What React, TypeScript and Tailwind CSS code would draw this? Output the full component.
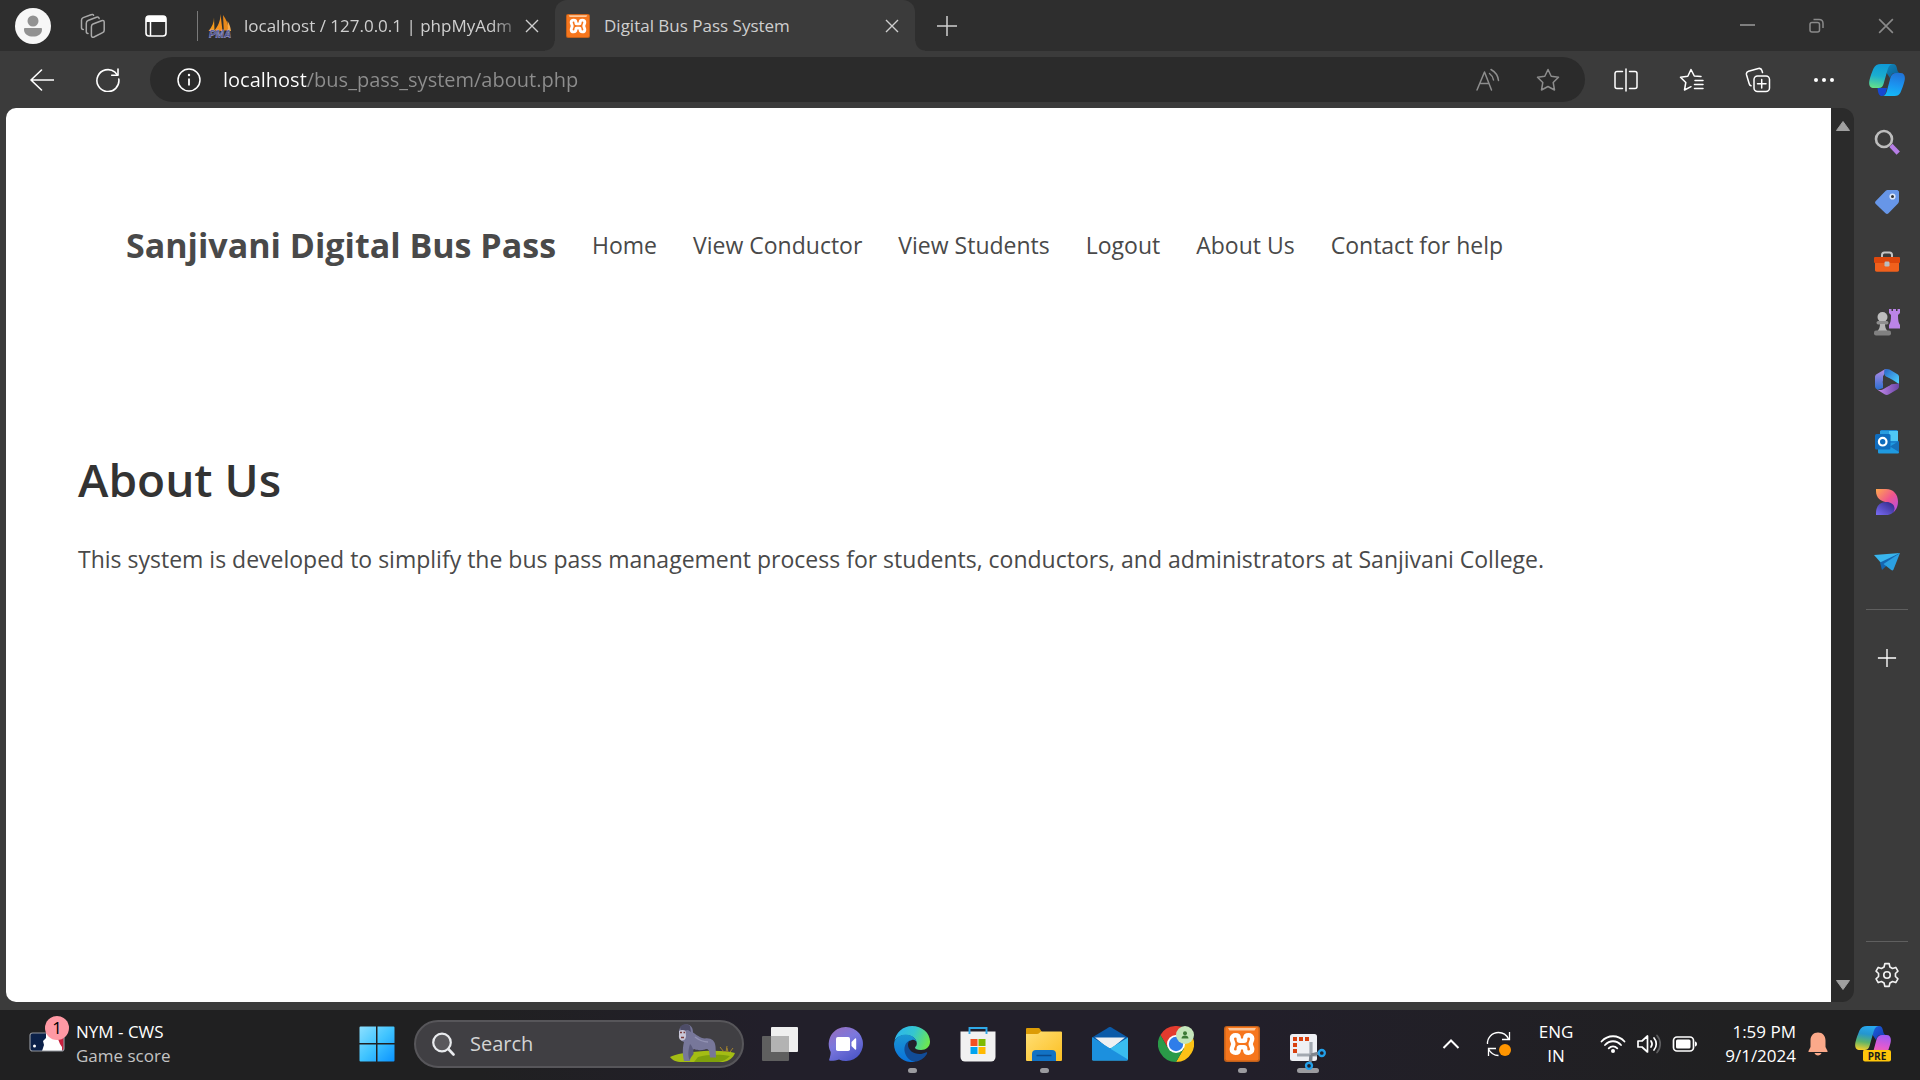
import React from "react";

type IconProps = { className?: string };

/* ---------- Browser chrome icons ---------- */

const Cross = ({ className }: IconProps) => (
  <svg width="14" height="14" viewBox="0 0 14 14" className={className} fill="none" stroke="currentColor" strokeWidth="1.4">
    <path d="M1 1l12 12M13 1L1 13" />
  </svg>
);

const Plus = ({ className }: IconProps) => (
  <svg width="22" height="22" viewBox="0 0 22 22" className={className} fill="none" stroke="currentColor" strokeWidth="1.5">
    <path d="M11 1v20M1 11h20" />
  </svg>
);

const Avatar = () => (
  <svg width="36" height="36" viewBox="0 0 36 36">
    <circle cx="18" cy="18" r="18" fill="#f7f7f7" />
    <circle cx="18" cy="13" r="5.5" fill="#929292" />
    <path d="M10 20h16c.8 0 1 .6 1 1.400C27 26 23 28.500 18 28.500S9 26 9 21.400c0-.8.2-1.400 1-1.400z" fill="#929292" />
  </svg>
);

const Workspaces = () => (
  <svg width="26" height="26" viewBox="0 0 26 26" fill="none" stroke="#a9a9a9" strokeWidth="1.500" strokeLinejoin="round" strokeLinecap="round">
    <path d="M13 11l8.500-3.300c1.700-.6 2.700 0 2.700 1.500v8c0 1.300-.4 1.900-1.600 2.400L14 24c-1.600.6-2.600 0-2.600-1.500v-8.800c0-1.300.3-2.200 1.600-2.700z" />
    <path d="M8 20.500c-1.200 0-1.700-.7-1.700-2v-8.300c0-1.500.4-2.200 1.700-2.700l8.500-3.300c1.400-.5 2.300 0 2.600 1.200" />
    <path d="M3.300 16.500c-1.200 0-1.800-.7-1.800-2V7.300c0-1.500.4-2.200 1.700-2.700L11 1.700c1.400-.5 2.300-.3 2.600.6" />
  </svg>
);

const TabActions = () => (
  <svg width="22" height="22" viewBox="0 0 22 22">
    <rect x="1" y="1" width="20" height="20" rx="3" fill="none" stroke="#fff" strokeWidth="1.600" />
    <path d="M1 4a3 3 0 0 1 3-3h14a3 3 0 0 1 3 3v3H1z" fill="#fff" />
    <path d="M5.500 7v14" stroke="#fff" strokeWidth="1.500" />
  </svg>
);

const PhpMyAdmin = () => (
  <svg width="24" height="24" viewBox="0 0 24 24">
    <path d="M6 3.500C6 9 4 13 .5 17H6.500z" fill="#f59a1a" />
    <path d="M12.500 0C12.500 7 10 12 6.500 16.500L14.500 17z" fill="#f7931e" />
    <path d="M15 1c3 4 5.500 9 5.800 15.500h-5z" fill="#e8891a" />
    <path d="M19.500 7c2 3 3 6 3.500 10h-3z" fill="#f9ad4d" />
    <text x="12" y="23.500" textAnchor="middle" fontFamily="Liberation Sans" fontWeight="700" fontStyle="italic" fontSize="10" fill="#3c3f7d" stroke="#b9bbe6" strokeWidth="0.400">PMA</text>
  </svg>
);

const Xampp = ({ size }: { size: number }) => (
  <svg width={size} height={size} viewBox="0 0 36 36">
    <rect width="36" height="36" rx="3" fill="#c2611b" />
    <rect x="1.500" y="1" width="33" height="33.500" rx="2" fill="#f6761d" />
    <path d="M4 2h28l-1.500 2.500h-25z" fill="#fbc79b" />
    <path
      d="M18 14.800h-2c-.9 0-1.200-.5-1.200-1.300v-1.300c0-2-1.300-3-3.300-3s-3.700 1.300-3.700 3.300c0 2.500 1.500 3.500 1.500 5.500s-1.500 3-1.500 5.500c0 2 1.500 3.300 3.700 3.300s3.300-1 3.300-3v-1.300c0-.8.3-1.300 1.200-1.300h4c.9 0 1.200.5 1.200 1.300v1.300c0 2 1.300 3 3.300 3s3.700-1.300 3.700-3.300c0-2.500-1.500-3.500-1.500-5.500s1.500-3 1.500-5.500c0-2-1.500-3.300-3.700-3.300s-3.300 1-3.300 3v1.300c0 .8-.3 1.300-1.200 1.300z"
      fill="none" stroke="#fff" strokeWidth="4.400" strokeLinejoin="round"
    />
  </svg>
);

const BackArrow = () => (
  <svg width="24" height="24" viewBox="0 0 24 24" fill="none" stroke="#fff" strokeWidth="1.600" strokeLinecap="round" strokeLinejoin="round">
    <path d="M23.500 12H1M11.500 2L1 12l10.500 10" />
  </svg>
);

const Reload = () => (
  <svg width="24" height="24" viewBox="0 0 24 24" fill="none" stroke="#fff" strokeWidth="1.600" strokeLinecap="round" strokeLinejoin="round">
    <path d="M22.800 11A11 11 0 1 1 19 4.200L21.500 7" />
    <path d="M22 1v6.300h-6.300" />
  </svg>
);

const Info = () => (
  <svg width="24" height="24" viewBox="0 0 24 24" fill="none" stroke="#fff" strokeWidth="1.500">
    <circle cx="12" cy="12" r="11" />
    <path d="M12 10.500v7" strokeWidth="1.800" />
    <circle cx="12" cy="7" r="1.200" fill="#fff" stroke="none" />
  </svg>
);

const ReadAloud = () => (
  <svg width="24" height="24" viewBox="0 0 24 24" fill="none" stroke="#8d8d8d" strokeWidth="1.500" strokeLinecap="round" strokeLinejoin="round">
    <path d="M1 22L8.500 4l7 18M3.800 15.500h9.200" />
    <path d="M13.500 5.500c2.300 1.700 3.600 4 4 6.500M15 1.500c4.500 2.500 7 6.500 7.500 11" />
  </svg>
);

const STAR = "M12 1.500l3.200 6.800 7.300 1-5.300 5.200 1.300 7.500L12 18.500 5.500 22l1.300-7.500L1.500 9.300l7.300-1z";

const Star = () => (
  <svg width="24" height="24" viewBox="0 0 24 24" fill="none" stroke="#8d8d8d" strokeWidth="1.500" strokeLinejoin="round">
    <path d={STAR} />
  </svg>
);

const SplitScreen = () => (
  <svg width="24" height="24" viewBox="0 0 24 24" fill="none" stroke="#fff" strokeWidth="1.500" strokeLinecap="round">
    <path d="M12 1v22M8.500 3.500H3a2 2 0 0 0-2 2v13a2 2 0 0 0 2 2h5.500M15.500 3.500H21a2 2 0 0 1 2 2v13a2 2 0 0 1-2 2h-5.500" />
  </svg>
);

const Favorites = () => (
  <svg width="25" height="24" viewBox="0 0 25 24" fill="none" stroke="#fff" strokeWidth="1.500" strokeLinecap="round" strokeLinejoin="round">
    <path d="M22 8.500l-6.700-.5L12 1.500 8.800 8.300l-7.300 1 5.300 5.200L5.500 22l6.500-3.300M16 12.500h8M15.500 16.500H24M15.500 20.500H24" />
  </svg>
);

const Collections = () => (
  <svg width="26" height="26" viewBox="0 0 26 26" fill="none" stroke="#fff" strokeWidth="1.500" strokeLinecap="round" strokeLinejoin="round">
    <rect x="9" y="9" width="15.500" height="15.500" rx="3.500" />
    <path d="M16.700 12.500v8.500M12.500 16.700H21M17.500 5.500l-.6-2c-.5-1.800-1.800-2.400-3.500-2L3.500 4.200c-1.700.5-2.400 1.800-2 3.500l2.700 9c.3 1.200 1 1.800 1.800 2" />
  </svg>
);

const More = () => (
  <svg width="24" height="24" viewBox="0 0 24 24" fill="#fff">
    <circle cx="4" cy="12" r="2" /><circle cx="12" cy="12" r="2" /><circle cx="20" cy="12" r="2" />
  </svg>
);

const CopilotRibbons = ({ id, left, fold, right, under }: { id: string; left: string[]; fold: string[]; right: string[]; under: string }) => (
  <>
    <defs>
      <linearGradient id={`${id}l`} x1=".5" y1="0" x2=".35" y2="1">
        {left.map((c, i) => <stop key={c} offset={i / (left.length - 1)} stopColor={c} />)}
      </linearGradient>
      <linearGradient id={`${id}f`} x1="0" y1="0" x2="1" y2="1">
        {fold.map((c, i) => <stop key={c} offset={i / (fold.length - 1)} stopColor={c} />)}
      </linearGradient>
      <linearGradient id={`${id}r`} x1=".6" y1="0" x2=".4" y2="1">
        {right.map((c, i) => <stop key={c} offset={i / (right.length - 1)} stopColor={c} />)}
      </linearGradient>
    </defs>
    <path d="M18 0h6c2.500 0 3.500 2 4 4.500.5 2.500 1 4.500 4 4.500h-6c-3 0-4 2-5 5l-4-6z" fill={`url(#${id}f)`} />
    <path d="M8.500 24H18l-1 4c-.7 2.700-2 4-4 4-3 0-3.500-2.500-4-4.500z" fill={under} />
    <path d="M12 0h11.500c-3 .5-4 2.500-5 6l-4 14c-.8 2.800-2 4-5 4H5c-4.500 0-5.500-3.500-4.500-8C1.500 12 3 8 4.500 4.500 6 1.200 8.500 0 12 0z" fill={`url(#${id}l)`} />
    <path d="M27 9h4.500c4 0 5 3.500 4 8-1 4-2.500 8-4 11.500-1.200 2.500-3 3.500-6 3.500H13c3 0 4-2 5-5.500l3.500-13C22.500 10.500 24 9 27 9z" fill={`url(#${id}r)`} />
  </>
);

const Copilot = () => (
  <svg width="36" height="32" viewBox="0 0 36 32">
    <CopilotRibbons id="cb" left={["#0f9ad6", "#1aaed0", "#63e08a"]} fold={["#1286b8", "#0a5a92"]} right={["#2173d6", "#1b93f0", "#14b9f7"]} under="#1747d0" />
  </svg>
);

/* ---------- Sidebar icons ---------- */

const SideSearch = () => (
  <svg width="26" height="26" viewBox="0 0 26 26" fill="none">
    <circle cx="10" cy="10" r="8" stroke="#bdbdbd" strokeWidth="2.600" />
    <path d="M18.500 18l4.200 4.500" stroke="#b67ee6" strokeWidth="4.500" strokeLinecap="square" />
  </svg>
);
const SideTag = () => (
  <svg width="26" height="26" viewBox="0 0 26 26">
    <path d="M14 1h9.500L25 2.500V12c0 1-.3 1.700-1 2.400l-9.500 9.800c-1 1-2 1-3 0L1.800 15c-1-1-1-2 0-3L11.500 2c.8-.8 1.500-1 2.500-1z" fill="#6796e8" />
    <circle cx="18.500" cy="7.500" r="2.300" fill="#333" stroke="#dbe7fb" strokeWidth="1.600" />
  </svg>
);
const SideTools = () => (
  <svg width="28" height="22" viewBox="0 0 28 22">
    <path d="M9 7V4c0-1.500 1-2.500 2.500-2.500h5C18 1.500 19 2.500 19 4v3" fill="none" stroke="#c4c4c4" strokeWidth="2" />
    <path d="M2 11h24v8c0 1-.6 1.700-1.700 1.700H3.700C2.600 20.700 2 20 2 19z" fill="#f0601c" />
    <rect x="1" y="6" width="26" height="6" rx="1" fill="#dd470c" />
    <rect x="11.500" y="10.500" width="5" height="5" rx="1.200" fill="#b9bdc1" />
  </svg>
);
const SideGames = () => (
  <svg width="28" height="28" viewBox="0 0 28 28">
    <path d="M16 1h2.500v2H20V1h3v2h1.500V1H27v4l-2 2c0 5 .5 8 2 10v3.500H16V17c1.500-2 2-5 2-10l-2-2z" fill="#bb84e8" />
    <circle cx="9.500" cy="9" r="5" fill="#bdbdbd" />
    <rect x="3.500" y="13" width="12" height="3.500" rx="1.700" fill="#8f8f8f" />
    <path d="M7 16h5c0 3 .8 5 2.500 7h-10C6.200 21 7 19 7 16z" fill="#b5b5b5" />
    <rect x="1" y="22.500" width="17" height="5" rx="2" fill="#808080" />
  </svg>
);
const SideM365 = () => (
  <svg width="26" height="28" viewBox="0 0 26 28">
    <defs>
      <linearGradient id="m3a" x1="0" y1="0" x2="0" y2="1">
        <stop offset="0" stopColor="#b78be6" /><stop offset="1" stopColor="#2a6fd0" />
      </linearGradient>
      <linearGradient id="m3b" x1="0" y1="0" x2="1" y2="1">
        <stop offset="0" stopColor="#2a63c8" /><stop offset="1" stopColor="#4fd6ff" />
      </linearGradient>
      <linearGradient id="m3c" x1="0" y1="0" x2="1" y2="0">
        <stop offset="0" stopColor="#c98df0" /><stop offset="1" stopColor="#6a45a5" />
      </linearGradient>
    </defs>
    <path d="M13 1L9 8.500V20l-5 1.800-1.500-.8C1.500 20.300 1 19.400 1 18V9c0-1.300.5-2.200 1.500-2.800l8-4.600C11.300 1.200 12 1 13 1z" fill="url(#m3a)" />
    <path d="M10.500 1.600c1.500-.8 3.500-.8 5 0l8 4.600C24.500 7 25 7.700 25 9v7l-7-4.500-6-3c-1.500-1-2.500-3-1.500-6.900z" fill="url(#m3b)" />
    <path d="M25 15.500V18c0 1.500-.5 2.500-1.500 3.200L15 26.300c-1.500.9-3 .9-4.500 0L3 21.500c3 1 5 .5 7-.7l7.500-4.500z" fill="url(#m3c)" />
    <circle cx="13" cy="14" r="4.300" fill="#3b3b3b" />
  </svg>
);
const SideOutlook = () => (
  <svg width="26" height="26" viewBox="0 0 26 26">
    <rect x="6" y="1" width="18" height="17" rx="1.500" fill="#1b84cf" />
    <rect x="14" y="2" width="10" height="10" fill="#4fc8f5" />
    <rect x="6" y="2" width="9" height="7" fill="#2a9de0" />
    <path d="M4 14h20l1-2v11c0 1-.6 1.500-1.500 1.500h-18C4.500 24.500 4 24 4 23z" fill="#1f9ae0" />
    <path d="M25 12v11l-9-5.500z" fill="#1670b8" />
    <rect x="1" y="5" width="15.500" height="15.500" rx="1.500" fill="#0f6cbd" />
    <circle cx="8.700" cy="12.700" r="3.800" fill="none" stroke="#fff" strokeWidth="2.200" />
  </svg>
);
const SideDesigner = () => (
  <svg width="26" height="28" viewBox="0 0 26 28">
    <defs>
      <linearGradient id="dsA" x1="0" y1="0" x2="1" y2="1">
        <stop offset="0" stopColor="#ffa94d" /><stop offset=".5" stopColor="#f0568c" /><stop offset="1" stopColor="#b14bf0" />
      </linearGradient>
      <linearGradient id="dsB" x1="0" y1="1" x2="1" y2="0">
        <stop offset="0" stopColor="#7a6cf5" /><stop offset="1" stopColor="#2d2580" />
      </linearGradient>
    </defs>
    <path d="M2 1h10c7.500 0 12 5.500 12 12.500 0 5-2 9-5 11 1.500-5 0-9-5-10C6.500 13.500 2 10 2 3z" fill="url(#dsA)" />
    <path d="M2 27v-2c0-7 4-11 10-11 5 0 8 2.500 8.500 6 .5 4-3 7-8.500 7z" fill="url(#dsB)" />
  </svg>
);
const SideDrop = () => (
  <svg width="28" height="20" viewBox="0 0 28 20">
    <path d="M1 3L27 1 9 12z" fill="#39b6ee" />
    <path d="M7 10.500L27 1 9 18z" fill="#1565b0" />
    <path d="M27 1l-6.500 16.500c-.5 1-1.300 1.200-2.200.6L10.500 12z" fill="#2ba0e2" />
  </svg>
);
const Gear = () => (
  <svg width="26" height="28" viewBox="0 0 24 24" fill="none" stroke="#f2f2f2" strokeWidth="1.500" strokeLinejoin="round">
    <path d="M10 1.500h4l.7 3.100 2.400 1.400 3-1 2 3.500-2.300 2.100v2.800l2.300 2.100-2 3.500-3-1-2.400 1.400-.7 3.100h-4l-.7-3.100L6.900 18l-3 1-2-3.500 2.300-2.100v-2.800L1.900 8.500l2-3.500 3 1 2.400-1.400z" />
    <circle cx="12" cy="12" r="3" />
  </svg>
);

/* ---------- Taskbar icons ---------- */

const Baseball = () => (
  <svg width="36" height="20" viewBox="0 0 36 20">
    <rect x="1" y="1" width="34" height="18" rx="2.500" fill="#0b2149" />
    <path d="M24 1h8.500A2.500 2.500 0 0 1 35 3.500v13a2.500 2.500 0 0 1-2.500 2.500H26z" fill="#c8203e" />
    <path d="M17 1h9l3 6 2 5 2 3v4H13l2-6-1-4 3-3z" fill="#fff" />
    <circle cx="5.500" cy="14" r="1.500" fill="#fff" />
    <rect x="1" y="1" width="34" height="18" rx="2.500" fill="none" stroke="#8f949c" strokeWidth="1.200" />
  </svg>
);

const WindowsLogo = () => (
  <svg width="36" height="36" viewBox="0 0 36 36">
    <defs>
      <linearGradient id="win" x1="0" y1="0" x2="1" y2="1">
        <stop offset="0" stopColor="#8de0ff" /><stop offset=".5" stopColor="#40c4ff" /><stop offset="1" stopColor="#0a93ff" />
      </linearGradient>
    </defs>
    <path d="M1.500.5H17v16.500H.5V1.500a1 1 0 0 1 1-1zM18.500.5h16a1 1 0 0 1 1 1V17h-17zM.5 18.500H17v17H1.500a1 1 0 0 1-1-1zM18.500 18.500h17v16a1 1 0 0 1-1 1h-16z" fill="url(#win)" />
  </svg>
);

const Magnifier = () => (
  <svg width="23" height="24" viewBox="0 0 23 24" fill="none" stroke="#e9ebee" strokeWidth="2.200" strokeLinecap="round">
    <circle cx="10" cy="10.500" r="8.800" fill="#ffffff22" />
    <path d="M16.300 17l5.200 5.500" strokeWidth="2.600" />
  </svg>
);

const Gorilla = () => (
  <svg width="68" height="40" viewBox="0 0 68 40">
    <path d="M2 33c5-3 18-5 34-6 13-.5 24 0 31 2-2 5-6 8-12 9H14C8 38 4 36 2 33z" fill="#a4bd14" />
    <path d="M30 33c9-2.500 22-3 32-1-3 3-6 5-11 6H26z" fill="#7fa00c" />
    <path d="M56 28l-4-5M58 28l1-6M60 28l-1-4M62 28l3-4" stroke="#a5842c" strokeWidth="1" />
    <path d="M11 8c0-5 3.500-8 8-7.500 4 .4 6 3.500 6 8 3 2 7 5.500 12 6 6-.8 10 2 10.500 8 .3 4 .3 7 .5 11h-6l-1-7c-1-1-2-2-4-1-4 1-8 1-11-.5-2.500 2-3 6-4 12h-6c-2-9-1-15 0-19-3-1-5-4-5-9z" fill="#77779a" />
    <path d="M22 20c2 2 4 6 3.500 10l-3 4-1 2c-2-5-1-11 .5-16z" fill="#5b5b7c" />
    <path d="M27 13c4 3 8 5 13 5" stroke="#9292b3" strokeWidth="1.500" fill="none" />
    <path d="M12 3c2-3 7-4 10-1l1 6-3-2-7 1z" fill="#4d4c67" />
    <path d="M11 7c2-1.500 5-1.500 6.500 0L18 12c0 3-2 4.500-4 4.500S10.500 14 11 11z" fill="#c9c7d8" />
    <path d="M12 8.500h2M15.500 8.500h1.500M13 13.500h3" stroke="#7a3a3a" strokeWidth="1.400" />
  </svg>
);

const TaskView = () => (
  <svg width="36" height="36" viewBox="0 0 36 36">
    <rect x="9" y="1" width="27" height="25" rx="1" fill="#efefef" />
    <rect x="0" y="10" width="27" height="25" rx="1" fill="#5f5f5f" />
    <path d="M9 10h18v16H9z" fill="#b3b3b3" />
  </svg>
);
const Chat = () => (
  <svg width="36" height="36" viewBox="0 0 36 36">
    <defs>
      <linearGradient id="chat" x1="0" y1="0" x2=".6" y2="1">
        <stop offset="0" stopColor="#9b6dbb" /><stop offset=".5" stopColor="#7c78dd" /><stop offset="1" stopColor="#5059c9" />
      </linearGradient>
    </defs>
    <path d="M18 1a17 17 0 1 1-7 32.500c-2.500 1-6 1.500-9 1.300-.8 0-1-.5-.8-1.200.8-2.400 1.500-5 1.500-7.600A17 17 0 0 1 18 1z" fill="url(#chat)" />
    <rect x="8" y="11" width="14" height="14" rx="1.800" fill="#fff" />
    <path d="M23.500 16l3.500-3.500c.6-.5 1.200-.2 1.200.6v9.800c0 .8-.6 1.100-1.200.6L23.500 20z" fill="#fff" />
  </svg>
);
const Edge = () => (
  <svg width="36" height="36" viewBox="0 0 36 36">
    <defs>
      <linearGradient id="edA" x1="0" y1=".3" x2="1" y2=".6">
        <stop offset="0" stopColor="#2bb4ef" /><stop offset=".5" stopColor="#35c6cf" /><stop offset="1" stopColor="#6de84e" />
      </linearGradient>
      <linearGradient id="edB" x1="0" y1="0" x2="0" y2="1">
        <stop offset="0" stopColor="#1b96d2" /><stop offset="1" stopColor="#0a72dc" />
      </linearGradient>
    </defs>
    <path d="M.3 16C1.500 6.500 9 0 18 0c10 0 18 7 18 15.500 0 5.500-4 8.500-9 8.500-4 0-6-1-6-2.200 0-1 1.800-1.600 1.800-4.300C22.800 13 18 9 12 9S1 12 .3 16z" fill="url(#edA)" />
    <path d="M0 18C.5 12 6 8.500 11.500 8.500c6.500 0 10.500 4 11.300 8C22 14.500 20 13.500 18 14c-5 1-7 5.500-6 11 1 5.500 5 10 9.500 10.700C10 38 0 29 0 18z" fill="url(#edB)" />
    <path d="M16 14.300c-5 2-6.500 7.700-5 12.700 1.700 5.500 6.500 9 11.500 8.500 5-1 8.500-4.500 10.500-7.800.6-1-.2-1.600-1.200-1.200-1.800.9-4 1.500-6.300 1.500-6 0-11.500-4-11.500-9 0-2 .8-3.700 2-4.700z" fill="#114c97" />
  </svg>
);
const Store = () => (
  <svg width="36" height="36" viewBox="0 0 36 36">
    <path d="M.5 5.500h35V31a4.500 4.500 0 0 1-4.500 4.500H5A4.500 4.500 0 0 1 .5 31z" fill="#f1f1f1" />
    <path d="M9.500 8V2h17v6" fill="none" stroke="#2fa9e8" strokeWidth="1.900" />
    <path d="M10.500 13h7v7h-7z" fill="#f25022" /><path d="M18.500 13h7v7h-7z" fill="#7fba00" />
    <path d="M10.500 21h7v7h-7z" fill="#00a4ef" /><path d="M18.500 21h7v7h-7z" fill="#ffb900" />
  </svg>
);
const Folder = () => (
  <svg width="36" height="36" viewBox="0 0 36 36">
    <defs>
      <linearGradient id="fol" x1="0" y1="0" x2="1" y2="1"><stop offset="0" stopColor="#ffdf75" /><stop offset="1" stopColor="#fcbf22" /></linearGradient>
    </defs>
    <path d="M0 3a1 1 0 0 1 1-1h11c1 0 1.500.3 2 1l1.500 2.500V12H0z" fill="#dc9c06" />
    <path d="M0 8h11c1 0 1.700-.3 2.300-1L15 5.500h20a1 1 0 0 1 1 1V34a1 1 0 0 1-1 1H1a1 1 0 0 1-1-1z" fill="url(#fol)" />
    <path d="M6 35v-7a4 4 0 0 1 4-4h16a4 4 0 0 1 4 4v7z" fill="#1272c4" />
    <path d="M10.500 29.500h15" stroke="#0a4a8c" strokeWidth="1.500" />
  </svg>
);
const Mail = () => (
  <svg width="36" height="36" viewBox="0 0 36 36">
    <path d="M0 11.500L17 1.200c.7-.4 1.300-.4 2 0L36 11.500V20H0z" fill="#0b5aa8" />
    <path d="M3 11.500h30L20 22h-4z" fill="#eef0f2" />
    <path d="M0 11.500l18 11 18-11V33a1.500 1.500 0 0 1-1.500 1.500h-33A1.500 1.500 0 0 1 0 33z" fill="#39bdf0" />
    <path d="M0 11.500l36 22c-.3.700-.8 1-1.500 1h-33A1.500 1.500 0 0 1 0 33z" fill="#1c90de" />
  </svg>
);
const Chrome = () => (
  <svg width="36" height="36" viewBox="0 0 36 36">
    <path d="M2.400 9A18 18 0 0 1 33.600 9H18v9l-7.800 4.500z" fill="#e33b2e" />
    <path d="M33.600 9A18 18 0 0 1 18 36l7.800-13.500L18 18V9z" fill="#fbc116" />
    <path d="M18 36A18 18 0 0 1 2.400 9l7.800 13.500L18 18l7.800 4.500z" fill="#2a9a48" />
    <circle cx="18" cy="18" r="9" fill="#fff" /><circle cx="18" cy="18" r="7.200" fill="#2f7de9" />
    <circle cx="27" cy="9" r="9" fill="#c5e6bb" />
    <circle cx="27" cy="7.300" r="2" fill="#3c7a36" />
    <path d="M23.500 12.500c0-2 1.500-3 3.500-3s3.500 1 3.500 3z" fill="#3c7a36" />
  </svg>
);
const Snipping = () => (
  <svg width="36" height="36" viewBox="0 0 36 36">
    <rect x="0" y="0" width="27" height="27" rx="2.500" fill="#eef0f4" />
    <path d="M3 5h16.500M5 9v11" fill="none" stroke="#d9410f" strokeWidth="4" strokeDasharray="4 2" />
    <path d="M7 21h20M21 8v19" stroke="#a3a9b1" strokeWidth="3.200" fill="none" />
    <path d="M21 21l8-2M21 21l-1 8" stroke="#7d848d" strokeWidth="3" />
    <circle cx="31.800" cy="19" r="3" fill="none" stroke="#22a0ea" strokeWidth="2.300" />
    <circle cx="19" cy="31.800" r="3" fill="none" stroke="#22a0ea" strokeWidth="2.300" />
  </svg>
);

const Chevron = () => (
  <svg width="18" height="12" viewBox="0 0 18 12" fill="none" stroke="#fff" strokeWidth="2"><path d="M1.500 10L9 2.500l7.500 7.500" /></svg>
);
const Sync = () => (
  <svg width="26" height="26" viewBox="0 0 26 26" fill="none" stroke="#fff" strokeWidth="1.300">
    <path d="M1.500 13C1 7 6 1.500 12.500 1.500c4.500 0 8 2 10 6.500M23.500 1v7.500H16M2.500 25v-7.500H10M2.500 18c2 4 5.500 6.500 10 6.500" />
    <circle cx="19" cy="19" r="6" fill="#ff9500" stroke="none" />
  </svg>
);
const Wifi = () => (
  <svg width="26" height="20" viewBox="0 0 26 20" fill="none" stroke="#fff" strokeWidth="1.800" strokeLinecap="round">
    <path d="M1.500 7.500c6.500-7 16.500-7 23 0M5 11c4.600-5 11.400-5 16 0M8.700 14.300c2.500-2.600 6.100-2.600 8.600 0" />
    <circle cx="13" cy="17" r="2" fill="#fff" stroke="none" />
  </svg>
);
const Speaker = () => (
  <svg width="26" height="20" viewBox="0 0 26 20" fill="none" stroke="#fff" strokeWidth="1.700" strokeLinecap="round" strokeLinejoin="round">
    <path d="M2 7h4l5.500-5v16L6 13H2z" />
    <path d="M15 7c1.300 1.800 1.300 4.200 0 6M18 4c3 3.500 3 8.500 0 12" />
    <path d="M21 1.500c4.300 5 4.300 12 0 17" stroke="#5d5d5f" />
  </svg>
);
const Battery = () => (
  <svg width="26" height="18" viewBox="0 0 26 18">
    <rect x="1.500" y="2" width="20" height="14" rx="3.500" fill="none" stroke="#fff" strokeWidth="1.700" />
    <rect x="4" y="4.500" width="14.500" height="9" rx="1.500" fill="#fff" />
    <path d="M23 6.500c1.500.3 2 1.300 2 2.500s-.5 2.200-2 2.500z" fill="#fff" />
  </svg>
);
const Bell = () => (
  <svg width="20" height="24" viewBox="0 0 20 24" fill="#fba98a">
    <path d="M10 .5c4.700 0 7.500 3.500 7.500 8v6.500L19.500 19v1H.5v-1l2-4V8.500c0-4.500 2.800-8 7.500-8zM6.500 21h7c-.5 1.600-1.800 2.500-3.500 2.500S7 22.600 6.500 21z" />
  </svg>
);
const CopilotPreview = () => (
  <svg width="36" height="36" viewBox="0 0 36 36">
    <g>
      <CopilotRibbons id="cp" left={["#28a8ee", "#2596cf", "#5bb36b", "#f2cf2c"]} fold={["#1c62e0", "#1532a8"]} right={["#a05cf5", "#e25ad0", "#ff7d74"]} under="#f4a03c" />
    </g>
    <rect x="8" y="24" width="28" height="11.500" rx="2" fill="#ffc60a" />
    <text x="22" y="33.500" textAnchor="middle" fontFamily="Open Sans" fontWeight="700" fontSize="10" fill="#1b1b1b">PRE</text>
  </svg>
);

/* ---------- Layout ---------- */

const sidebarApps: { label: string; icon: React.ReactNode }[] = [
  { label: "Search", icon: <SideSearch /> },
  { label: "Shopping", icon: <SideTag /> },
  { label: "Tools", icon: <SideTools /> },
  { label: "Games", icon: <SideGames /> },
  { label: "Microsoft 365", icon: <SideM365 /> },
  { label: "Outlook", icon: <SideOutlook /> },
  { label: "Designer", icon: <SideDesigner /> },
  { label: "Drop", icon: <SideDrop /> },
];

const taskbarApps: { label: string; icon: React.ReactNode; state?: "open" | "active" }[] = [
  { label: "Task view", icon: <TaskView /> },
  { label: "Chat", icon: <Chat /> },
  { label: "Microsoft Edge", icon: <Edge />, state: "open" },
  { label: "Microsoft Store", icon: <Store /> },
  { label: "File Explorer", icon: <Folder />, state: "open" },
  { label: "Mail", icon: <Mail /> },
  { label: "Google Chrome", icon: <Chrome /> },
  { label: "XAMPP", icon: <Xampp size={36} />, state: "open" },
  { label: "Snipping Tool", icon: <Snipping />, state: "active" },
];

const navLinks = ["Home", "View Conductor", "View Students", "Logout", "About Us", "Contact for help"];

function TabStrip() {
  return (
    <header className="flex h-[51px] shrink-0 items-center bg-[#2e2e2e] text-[#cfcfcf]">
      <button aria-label="Profile" className="ml-[15px]"><Avatar /></button>
      <button aria-label="Workspaces" className="ml-[29px]"><Workspaces /></button>
      <button aria-label="Tab actions" className="ml-[39px]"><TabActions /></button>
      <div className="ml-[30px] h-[30px] w-px bg-[#7a7a7a]" />
      <div className="flex h-full w-[357px] items-center pl-[10px] pr-4">
        <PhpMyAdmin />
        <span className="ml-3 flex-1 whitespace-nowrap text-[17px] [mask-image:linear-gradient(to_right,black_88%,transparent)]">
          localhost / 127.0.0.1 | phpMyAdm
        </span>
        <button aria-label="Close tab"><Cross /></button>
      </div>
      <div className="relative flex h-full w-[360px] items-center rounded-t-[12px] bg-[#3b3b3b] pl-[11px] pr-4">
        <span className="absolute bottom-0 right-full size-[10px] bg-[radial-gradient(circle_at_0_0,#2e2e2e_9px,#3b3b3b_10px)]" />
        <span className="absolute bottom-0 left-full size-[10px] bg-[radial-gradient(circle_at_100%_0,#2e2e2e_9px,#3b3b3b_10px)]" />
        <Xampp size={24} />
        <span className="ml-[14px] flex-1 whitespace-nowrap text-[17px]">Digital Bus Pass System</span>
        <button aria-label="Close tab"><Cross /></button>
      </div>
      <button aria-label="New tab" className="ml-[21px]"><Plus /></button>
      <div className="flex-1" />
      <div className="flex items-center gap-[54px] pr-[26px] text-[#8a8a8a]">
        <button aria-label="Minimize">
          <svg width="15" height="15" viewBox="0 0 15 15"><path d="M0 7h15" stroke="currentColor" strokeWidth="1.800" /></svg>
        </button>
        <button aria-label="Restore">
          <svg width="15" height="15" viewBox="0 0 15 15" fill="none" stroke="currentColor" strokeWidth="1.500">
            <rect x="1" y="4.500" width="9.500" height="9.500" rx="2" />
            <path d="M4.500 1.500H10c2.500 0 4 1.500 4 4V10" />
          </svg>
        </button>
        <button aria-label="Close window"><Cross className="size-4" /></button>
      </div>
    </header>
  );
}

function Toolbar() {
  return (
    <div className="flex h-[57px] shrink-0 items-center bg-[#3b3b3b]">
      <button aria-label="Back" className="ml-[30px]"><BackArrow /></button>
      <button aria-label="Reload" className="ml-[42px]"><Reload /></button>
      <div className="ml-[30px] flex h-[45px] flex-1 items-center rounded-full bg-[#2b2b2b] pl-[27px] pr-[25px]">
        <Info />
        <input
          aria-label="Address"
          defaultValue="localhost/bus_pass_system/about.php"
          className="ml-[22px] h-9 min-w-0 flex-1 bg-[linear-gradient(to_right,#ffffff_84px,#8e8e8e_84px)] bg-clip-text text-[20px] text-transparent outline-none"
        />
        <div className="flex gap-9">
          <button aria-label="Read aloud"><ReadAloud /></button>
          <button aria-label="Add to favorites"><Star /></button>
        </div>
      </div>
      <div className="ml-[29px] flex items-center gap-[41px]">
        <button aria-label="Split screen"><SplitScreen /></button>
        <button aria-label="Favorites"><Favorites /></button>
        <button aria-label="Collections"><Collections /></button>
        <button aria-label="More"><More /></button>
      </div>
      <button aria-label="Copilot" className="ml-[33px] mr-[15px]"><Copilot /></button>
    </div>
  );
}

function Page() {
  return (
    <main className="flex-1 rounded-l-[10px] bg-white text-[#494949]">
      <nav className="flex items-center gap-9 px-[120px] pt-[110px] text-[23px] leading-[54px]">
        <a href="#" className="text-[34px] font-bold">Sanjivani Digital Bus Pass</a>
        {navLinks.map((label) => (
          <a key={label} href="#" className="whitespace-nowrap">{label}</a>
        ))}
      </nav>
      <section className="px-[72px] pt-[171px]">
        <h1 className="text-[46px] font-semibold leading-[72px] text-[#333333]">About Us</h1>
        <p className="mt-[26px] text-[23px] leading-9">
          This system is developed to simplify the bus pass management process for students, conductors, and administrators at Sanjivani College.
        </p>
      </section>
    </main>
  );
}

function Scrollbar() {
  return (
    <div className="flex w-[23px] flex-col items-center justify-between rounded-r-[12px] bg-[#2b2b2b] pb-[11px] pt-3">
      <button aria-label="Scroll up">
        <svg width="16" height="12" viewBox="0 0 16 12"><path d="M8 1.500l6.500 9h-13z" fill="#a0a0a0" stroke="#a0a0a0" strokeLinejoin="round" /></svg>
      </button>
      <button aria-label="Scroll down">
        <svg width="16" height="12" viewBox="0 0 16 12"><path d="M8 10.500l6.500-9h-13z" fill="#a0a0a0" stroke="#a0a0a0" strokeLinejoin="round" /></svg>
      </button>
    </div>
  );
}

function Sidebar() {
  return (
    <aside className="flex w-[66px] flex-col items-center text-white">
      {sidebarApps.map(({ label, icon }) => (
        <button key={label} aria-label={label} className="flex h-[60px] w-full items-center justify-center first:mt-1">
          {icon}
        </button>
      ))}
      <hr className="mt-[17px] w-[42px] border-[#5f5f5f]" />
      <button aria-label="Customize" className="mt-[38px]"><Plus className="size-5" /></button>
      <div className="flex-1" />
      <hr className="w-[42px] border-[#5f5f5f]" />
      <button aria-label="Settings" className="mb-[21px] mt-[19px]"><Gear /></button>
    </aside>
  );
}

function Taskbar() {
  return (
    <footer className="flex h-[70px] shrink-0 items-center bg-[linear-gradient(to_right,#202021_0%,#202021_25%,#221f2a_40%,#221f2a_65%,#202021_90%)] pb-[2px] text-white">
      <button className="flex w-[359px] items-center pl-[29px] text-left">
        <span className="relative mt-[-4px]">
          <Baseball />
          <span className="absolute -right-1 -top-4 flex size-6 items-center justify-center rounded-full bg-[#ff99a4] text-[17px] text-black">1</span>
        </span>
        <span className="ml-[11px] text-[17px] leading-6">
          <span className="block">NYM - CWS</span>
          <span className="block text-[#c4c4c4]">Game score</span>
        </span>
      </button>
      <button aria-label="Start"><WindowsLogo /></button>
      <label className="ml-[19px] flex h-12 w-[330px] items-center rounded-full border-2 border-[#57565a] bg-[#403f43] pl-4 pr-[6px]">
        <Magnifier />
        <input aria-label="Search" placeholder="Search" className="ml-[15px] min-w-0 flex-1 bg-transparent text-[20px] outline-none placeholder:text-[#d4d4d4]" />
        <Gorilla />
      </label>
      <div className="ml-[3px] flex h-full">
        {taskbarApps.map(({ label, icon, state }) => (
          <button key={label} aria-label={label} className={`relative flex w-[66px] items-center justify-center ${state === "active" ? "pt-4" : ""}`}>
            {state && (
              <span className={`absolute bottom-[5px] h-[5px] rounded-full bg-[#9b9b9f] ${state === "active" ? "w-[22px]" : "w-[9px]"}`} />
            )}
            <span className="relative">{icon}</span>
          </button>
        ))}
      </div>
      <div className="flex-1" />
      <button aria-label="Show hidden icons"><Chevron /></button>
      <button aria-label="Updates" className="ml-[26px]"><Sync /></button>
      <button className="ml-5 w-[48px] text-center text-[17px] leading-6">ENG<br />IN</button>
      <button aria-label="Network, volume and battery" className="ml-5 flex items-center gap-[10px]"><Wifi /><Speaker /><Battery /></button>
      <button className="ml-4 w-[82px] whitespace-nowrap text-right text-[17px] leading-6">
        <time className="flex flex-col items-end"><span>1:59 PM</span><span>9/1/2024</span></time>
      </button>
      <button aria-label="Notifications" className="ml-3"><Bell /></button>
      <button aria-label="Copilot preview" className="ml-[27px] mr-[29px]"><CopilotPreview /></button>
    </footer>
  );
}

export default function App() {
  return (
    <div className='flex min-h-screen flex-col bg-[#3b3b3b] font-["Open_Sans","Noto_Sans",sans-serif]'>
      <TabStrip />
      <Toolbar />
      <div className="flex flex-1">
        <div className="mb-2 ml-[6px] flex flex-1">
          <Page />
          <Scrollbar />
        </div>
        <Sidebar />
      </div>
      <Taskbar />
    </div>
  );
}
